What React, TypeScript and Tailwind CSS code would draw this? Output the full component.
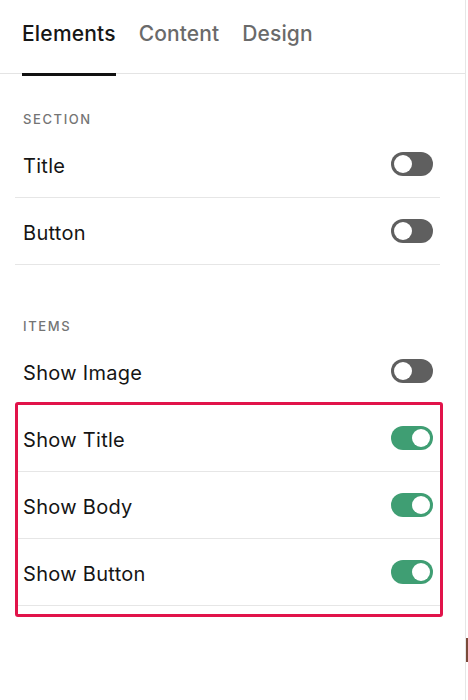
import React from "react";

function Toggle({ on }: { on: boolean }) {
  return (
    <div
      className={
        on
          ? "relative h-[24px] w-[42px] rounded-full bg-[#3f9e73]"
          : "relative h-[24px] w-[42px] rounded-full bg-[#5f5f5f]"
      }
    >
      <div
        className={
          on
            ? "absolute right-[3px] top-[3px] h-[18px] w-[18px] rounded-full bg-white"
            : "absolute left-[3px] top-[3px] h-[18px] w-[18px] rounded-full bg-white"
        }
      />
    </div>
  );
}

function Row({ label, on }: { label: string; on: boolean }) {
  return (
    <div className="flex h-[67px] items-center justify-between border-b border-[#e6e6e6] pl-[8px] pr-[7px]">
      <span className="mt-[3px] text-[20px] leading-[28px] tracking-[0.3px] text-[#151515]">{label}</span>
      <Toggle on={on} />
    </div>
  );
}

function Label({ text }: { text: string }) {
  return (
    <div className="flex h-[22px] items-center pl-[8px] text-[13px] font-medium tracking-[1.6px] text-[#747474]">
      {text}
    </div>
  );
}

export default function App() {
  return (
    <div
      className="relative h-[700px] w-[468px] overflow-hidden bg-white"
      style={{ fontFamily: "Inter, 'Noto Sans', sans-serif" }}
    >
      <div className="h-[700px] w-[466px] border-r border-[#e6e6e6]">
        <div className="flex h-[74px] gap-[23px] border-b border-[#e4e4e4] pl-[22px] pt-[20px]">
          <div className="relative h-[54px]">
            <span className="text-[21px] font-medium leading-[28px] tracking-[0.2px] text-[#161616]">Elements</span>
            <div className="absolute -bottom-[2px] left-0 right-0 h-[3px] bg-[#111111]" />
          </div>
          <span className="text-[21px] font-medium leading-[28px] tracking-[0.1px] text-[#6a6a6a]">Content</span>
          <span className="text-[21px] font-medium leading-[28px] tracking-[0.1px] text-[#6a6a6a]">Design</span>
        </div>
        <div className="pl-[15px] pr-[25px]">
          <div className="pt-[35px]">
            <Label text="SECTION" />
            <Row label="Title" on={false} />
            <Row label="Button" on={false} />
          </div>
          <div className="mt-[51px]">
            <Label text="ITEMS" />
            <Row label="Show Image" on={false} />
            <div className="relative">
              <Row label="Show Title" on={true} />
              <Row label="Show Body" on={true} />
              <Row label="Show Button" on={true} />
              <div className="pointer-events-none absolute -top-[3px] left-0 -right-[3px] -bottom-[11px] rounded-[3px] border-[3px] border-[#e1134a]" />
            </div>
          </div>
        </div>
      </div>
      <div className="absolute right-0 top-[638px] h-[24px] w-[2px] bg-[#7a4a3a]" />
    </div>
  );
}
